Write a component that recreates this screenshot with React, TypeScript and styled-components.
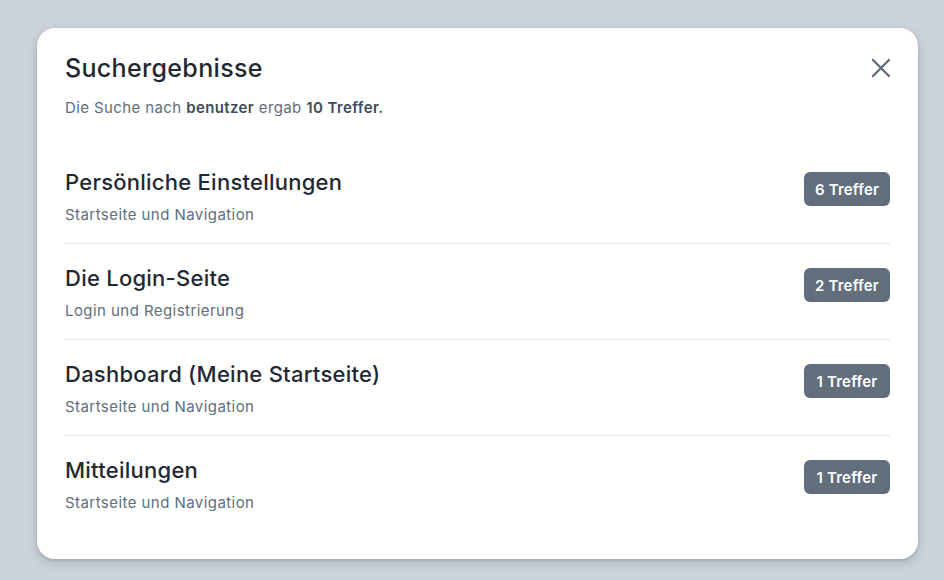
import styled, { createGlobalStyle } from "styled-components";

const GlobalStyle = createGlobalStyle`
  html, body {
    margin: 0;
    padding: 0;
    background: #cbd2d9;
  }

  body {
    font-family: "Inter", "Noto Sans", sans-serif;
  }
`;

const Page = styled.div`
  width: 944px;
  height: 580px;
  box-sizing: border-box;
  padding: 28px 26px 0 37px;
`;

const Card = styled.div`
  width: 881px;
  box-sizing: border-box;
  background: #ffffff;
  border-radius: 18px;
  padding: 24px 28px 28px;
  box-shadow: 0 4px 10px rgba(31, 41, 51, 0.18), 0 1px 3px rgba(31, 41, 51, 0.12);
`;

const Header = styled.div`
  display: flex;
  align-items: center;
  justify-content: space-between;
`;

const Title = styled.h1`
  margin: 0;
  font-size: 25px;
  line-height: 32px;
  font-weight: 550;
  color: #1f2933;
  letter-spacing: 0.33px;
`;

const CloseButton = styled.button`
  display: flex;
  align-items: center;
  justify-content: center;
  width: 24px;
  height: 24px;
  padding: 0;
  margin-right: -3px;
  border: none;
  background: none;
  color: #616e7c;
  cursor: pointer;
`;

const Summary = styled.p`
  margin: 14px 0 0;
  font-size: 15px;
  line-height: 20px;
  color: #616e7c;
  letter-spacing: 0.39px;

  strong {
    font-weight: 600;
    color: #3e4c59;
  }
`;

const List = styled.ul`
  list-style: none;
  margin: 30px 0 0;
  padding: 0;
`;

const Row = styled.li`
  display: flex;
  justify-content: space-between;
  align-items: flex-start;
  padding: 22px 0 18px;
  border-bottom: 1px solid #e4e7eb;

  &:last-child {
    border-bottom: none;
  }
`;

const RowText = styled.div`
  display: flex;
  flex-direction: column;
  gap: 11px;
`;

const RowTitle = styled.div`
  font-size: 22px;
  line-height: 24px;
  font-weight: 550;
  color: #1f2933;
  letter-spacing: 0.25px;
`;

const RowSub = styled.div`
  font-size: 15px;
  line-height: 20px;
  color: #616e7c;
  letter-spacing: 0.44px;
`;

const Badge = styled.span`
  margin-top: 2px;
  display: inline-flex;
  align-items: center;
  justify-content: center;
  width: 86px;
  height: 34px;
  border-radius: 6px;
  background: #616e7c;
  color: #ffffff;
  font-size: 15px;
  font-weight: 600;
  letter-spacing: 0.2px;
  white-space: nowrap;
`;

const results = [
  { title: "Persönliche Einstellungen", section: "Startseite und Navigation", hits: 6 },
  { title: "Die Login-Seite", section: "Login und Registrierung", hits: 2 },
  { title: "Dashboard (Meine Startseite)", section: "Startseite und Navigation", hits: 1 },
  { title: "Mitteilungen", section: "Startseite und Navigation", hits: 1 },
];

export default function App() {
  return (
    <Page>
      <GlobalStyle />
      <Card>
        <Header>
          <Title>Suchergebnisse</Title>
          <CloseButton aria-label="Schließen">
            <svg width="22" height="22" viewBox="0 0 22 22" fill="none">
              <path
                d="M3 3 L19 19 M19 3 L3 19"
                stroke="currentColor"
                strokeWidth="2.4"
                strokeLinecap="round"
              />
            </svg>
          </CloseButton>
        </Header>
        <Summary>
          Die Suche nach <strong>benutzer</strong> ergab <strong>10 Treffer.</strong>
        </Summary>
        <List>
          {results.map((r) => (
            <Row key={r.title}>
              <RowText>
                <RowTitle>{r.title}</RowTitle>
                <RowSub>{r.section}</RowSub>
              </RowText>
              <Badge>{r.hits} Treffer</Badge>
            </Row>
          ))}
        </List>
      </Card>
    </Page>
  );
}
